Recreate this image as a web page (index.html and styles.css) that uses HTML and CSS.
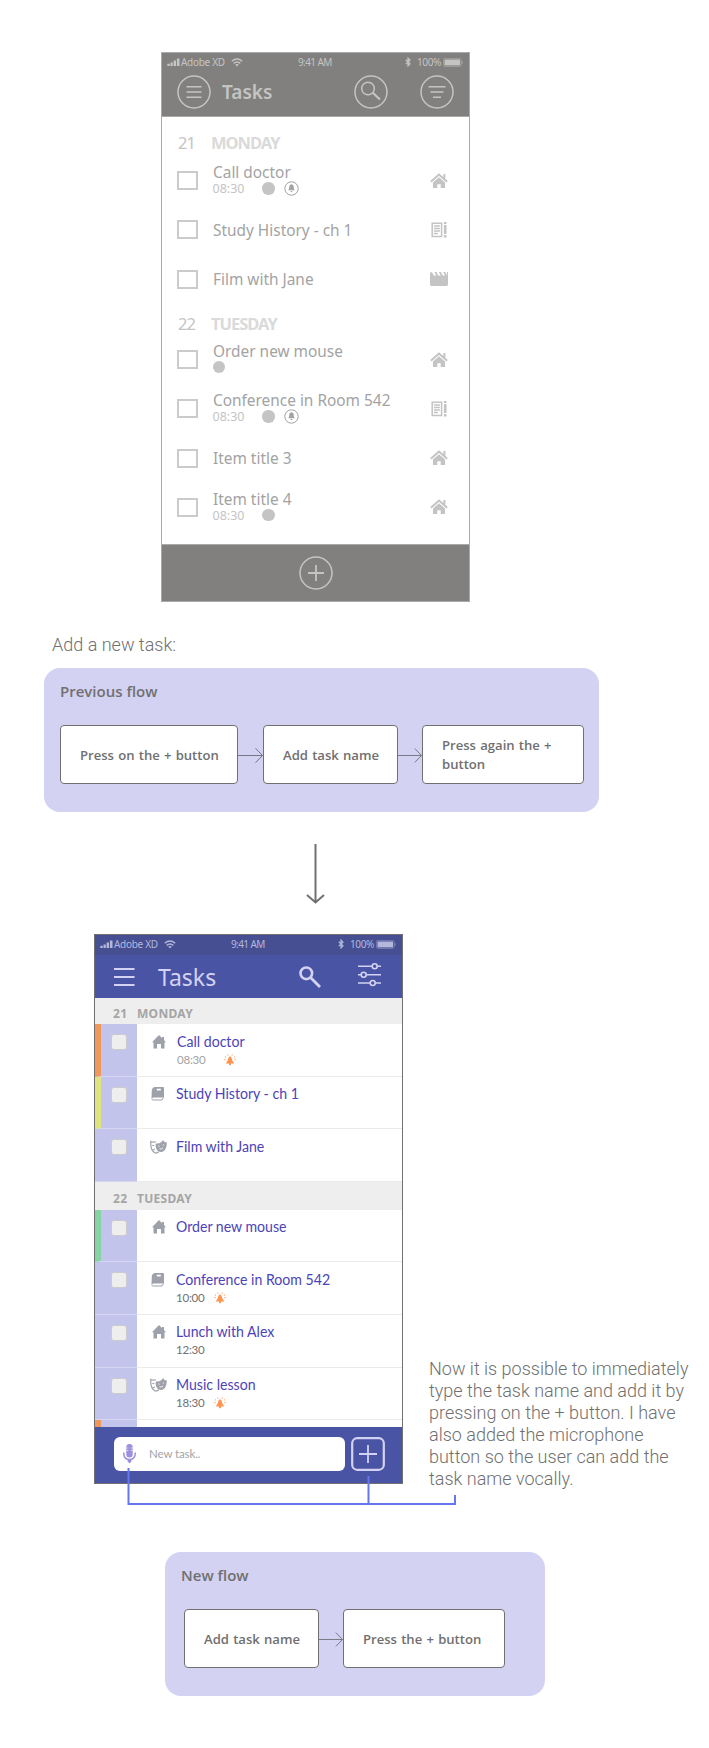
FILE: index.html
```html
<!DOCTYPE html>
<html lang="en">
<head>
<meta charset="utf-8">
<title>Tasks redesign</title>
<link rel="stylesheet" href="styles.css">
</head>
<body>
<svg class="defs" width="0" height="0">
  <symbol id="roof-house" viewBox="0 0 17 15"><path d="M.8 8.2 8.5 1.4l7.7 6.8M13.6 5.5V1" fill="none" stroke="currentColor" stroke-width="1.9"/><path d="M2.8 8.8 8.5 4l5.7 4.8v5.4h-4.1v-3.7H6.900v3.700H2.800z" fill="currentColor"/></symbol>
  <symbol id="notes" viewBox="0 0 17 16"><path d="M1.700 1.200h9.400v13.400H1.700z" fill="none" stroke="currentColor" stroke-width="1.500"/><path d="M3.400 4h6M3.400 6.500h6M3.400 9h6M3.400 11.500h4" stroke="currentColor" stroke-width="1.400"/><path d="M14.700 0v2M14.700 3v9M14.700 13v2.400" stroke="currentColor" stroke-width="2.600"/></symbol>
  <symbol id="clapper" viewBox="0 0 19 16"><path d="M0 2.500Q0 .6 2 .6l2 3.600h2.600L4.600.6h2.200l2 3.600h2.500L9.300.6h2.200l2 3.600h2.300L13.900.6H16l2 3.400V.6h1V13.500q0 2-2 2H2q-2 0-2-2z" fill="currentColor"/></symbol>
  <symbol id="bell-ring" viewBox="0 0 15 15"><circle cx="7.500" cy="7.500" r="6.700" fill="none" stroke="currentColor"/><path d="M7.500 3.200c2 .3 2.300 1.800 2.300 3.300 0 1.300.5 2 1 2.800H4.200c.5-.8 1-1.500 1-2.800 0-1.500.3-3 2.300-3.300zM6.500 10h2q-.2 1.300-1 1.300t-1-1.300z" fill="currentColor"/></symbol>
  <symbol id="house" viewBox="0 0 14 14"><path d="M7 0 10 2.900V2h2v2.900L14 7.300h-1.500v6.200H9V9H5v4.500H1.500V7.300H0z" fill="currentColor"/></symbol>
  <symbol id="book" viewBox="0 0 14 14"><path d="M3.500 0H12q1 0 1 1v9.500H3q-1.700 0-2.500 1L.8 3Q1.300.5 3.500 0z" fill="currentColor"/><path d="M5.800 2.600h4" stroke="#fff" stroke-width="1.700"/><path d="M12.500 10.500 11 13H2.300Q.8 13 .9 11.500" fill="none" stroke="currentColor"/></symbol>
  <symbol id="masks" viewBox="0 0 17 14"><path d="M6 1.700Q3.200 2.600.8 1.500c-.3 4 .8 9.500 4.300 11.500 1.400.2 2.800-.4 3.700-1.200" fill="none" stroke="currentColor" stroke-width="1.200"/><path d="M2.300 5.500h2M3 10.300q.7-1.300 2-1.300" stroke="currentColor" stroke-width="1.200" fill="none"/><path d="M5.800 3.500q3 .5 5.700-1.500L13.200 0l1 1.700q1 .8 2.600.6c0 4-1 9-5.300 9.700C7.500 12.600 5 8 5.800 3.500z" fill="currentColor"/><path d="M8.200 6.200q.7-.7 1.300 0M12.800 5.200q.7-.7 1.300 0M9.500 8.800q2 .9 3.700-1" fill="none" stroke="#fff" stroke-width=".9"/></symbol>
  <symbol id="alarm" viewBox="0 0 12 12"><path d="M6 2.300 7.300 3.200 8.300 6.200 10.200 9.400H1.800L3.700 6.200 4.700 3.200zM5 9.400h2v1.300l-1 .9-1-.9z" fill="currentColor"/><path d="M4 1.600 3.600.5M8 1.600 8.400.5M2 3.400 1 2.500M10 3.400l1-.9M1.500 5.600H.3M10.500 5.600h1.200" stroke="currentColor" stroke-width="1"/></symbol>
  <symbol id="bars" viewBox="0 0 14 14"><path d="M.3 11V8.700h2.400V11zM3.500 11V7.500h2.300V11zM6.600 11V5.500h2.400V11zM9.900 11V3.500h2.600V11z" fill="currentColor"/></symbol>
  <symbol id="wifi" viewBox="0 0 12 9"><path d="M.8 3.200q5.200-4.400 10.400 0M2.700 5.300q3.300-2.700 6.600 0" fill="none" stroke="currentColor" stroke-width="1.500"/><path d="m6 8.600-1.800-2Q6 5.400 7.800 6.600z" fill="currentColor"/></symbol>
  <symbol id="bluetooth" viewBox="0 0 6 10"><path d="m.7 2.800 4.300 4L3 9V1l2 2.100-4.300 4" fill="none" stroke="currentColor" stroke-width="1.200"/></symbol>
  <symbol id="battery" viewBox="0 0 20 9"><rect x=".4" y=".4" width="17.700" height="8" rx="1.500" fill="none" stroke="currentColor" stroke-width=".7" opacity=".6"/><path d="M1.500 1.500H17v5.900H1.500z" fill="currentColor"/><path d="M19 3v3" stroke="currentColor" opacity=".5"/></symbol>
  <symbol id="arrow" viewBox="0 0 25 16"><path d="M0 8.500h24.500M17.500 1.300 24.500 8.500l-7 7.200" fill="none" stroke="#77757f"/></symbol>
</svg>

<main class="board">
  <section class="phone old">
    <header class="old-header">
      <div class="status">
        <svg class="signal"><use href="#bars"/></svg><span class="carrier">Adobe XD</span><svg class="wifi"><use href="#wifi"/></svg>
        <span class="clock">9:41 AM</span>
        <svg class="bt"><use href="#bluetooth"/></svg><span class="percent">100%</span><svg class="battery"><use href="#battery"/></svg>
      </div>
      <div class="old-bar">
        <svg class="round" viewBox="0 0 34 34"><circle cx="17" cy="17" r="16"/><path d="M9.500 11.700h15M9.500 17h15M9.500 22.300h15"/></svg>
        <h1 class="old-title">Tasks</h1>
        <svg class="round search" viewBox="0 0 34 34"><circle cx="17" cy="17" r="16"/><circle cx="14" cy="13.500" r="6.300"/><path d="m18.500 17.500 7.500 7" stroke-width="2.200"/></svg>
        <svg class="round" viewBox="0 0 34 34"><circle cx="17" cy="17" r="16"/><path d="M8.500 11.700h17M10.500 17h13M13 22.300h8"/></svg>
      </div>
    </header>
    <div class="old-list">
      <h2 class="old-day"><span>21</span><b>MONDAY</b></h2>
      <div class="old-row"><i class="box"></i><div class="old-text double"><p>Call doctor</p><div class="meta"><small>08:30</small><i class="dot"></i><svg class="bell"><use href="#bell-ring"/></svg></div></div><svg class="kind"><use href="#roof-house"/></svg></div>
      <div class="old-row"><i class="box"></i><div class="old-text"><p>Study History - ch 1</p></div><svg class="kind"><use href="#notes"/></svg></div>
      <div class="old-row"><i class="box"></i><div class="old-text"><p>Film with Jane</p></div><svg class="kind"><use href="#clapper"/></svg></div>
      <h2 class="old-day second"><span>22</span><b>TUESDAY</b></h2>
      <div class="old-row"><i class="box"></i><div class="old-text double"><p>Order new mouse</p><div class="meta"><i class="dot"></i></div></div><svg class="kind"><use href="#roof-house"/></svg></div>
      <div class="old-row"><i class="box"></i><div class="old-text double"><p>Conference in Room 542</p><div class="meta"><small>08:30</small><i class="dot"></i><svg class="bell"><use href="#bell-ring"/></svg></div></div><svg class="kind"><use href="#notes"/></svg></div>
      <div class="old-row"><i class="box"></i><div class="old-text"><p>Item title 3</p></div><svg class="kind"><use href="#roof-house"/></svg></div>
      <div class="old-row"><i class="box"></i><div class="old-text double"><p>Item title 4</p><div class="meta"><small>08:30</small><i class="dot"></i></div></div><svg class="kind"><use href="#roof-house"/></svg></div>
    </div>
    <footer class="old-footer"><svg class="round" viewBox="0 0 34 34"><circle cx="17" cy="17" r="16"/><path d="M9 17h16M17 9v16" stroke-width="1.800"/></svg></footer>
  </section>

  <p class="caption">Add a new task:</p>

  <section class="flow previous">
    <h2>Previous flow</h2>
    <div class="steps">
      <div class="step long">Press on the + button</div><svg class="arrow"><use href="#arrow"/></svg>
      <div class="step short">Add task name</div><svg class="arrow tight"><use href="#arrow"/></svg>
      <div class="step medium">Press again the + button</div>
    </div>
  </section>

  <svg class="down" viewBox="0 0 20 62"><path d="M10.500 0v58M2 51 10.500 58.500 19 51" fill="none" stroke="#707070" stroke-width="2"/></svg>

  <div class="redesign">
    <section class="phone new">
      <div class="status">
        <svg class="signal"><use href="#bars"/></svg><span class="carrier">Adobe XD</span><svg class="wifi"><use href="#wifi"/></svg>
        <span class="clock">9:41 AM</span>
        <svg class="bt"><use href="#bluetooth"/></svg><span class="percent">100%</span><svg class="battery"><use href="#battery"/></svg>
      </div>
      <header class="new-bar">
        <svg class="menu" viewBox="0 0 21 20"><path d="M0 2h20.500M0 10h20.500M0 18h20.500"/></svg>
        <h1 class="new-title">Tasks</h1>
        <svg class="find" viewBox="0 0 22 22"><circle cx="7.300" cy="7.300" r="5.800"/><path d="m11.500 11.500 9.500 9.500" stroke-width="2.800"/></svg>
        <svg class="sliders" viewBox="0 0 23 24"><path d="M0 3.300h14M19.500 3.300H23M0 11.700h3M8.500 11.700H23M0 20h12M17.500 20H23"/><circle cx="16.700" cy="3.300" r="2.500"/><circle cx="5.700" cy="11.700" r="2.500"/><circle cx="14.700" cy="20" r="2.500"/></svg>
      </header>
      <h2 class="new-day"><span>21</span>MONDAY</h2>
      <div class="new-row orange"><div class="side"><i class="check"></i></div><svg class="type"><use href="#house"/></svg><div class="new-text far"><p>Call doctor</p><div class="when pale">08:30<svg class="alarm wide"><use href="#alarm"/></svg></div></div></div>
      <div class="new-row yellow"><div class="side"><i class="check"></i></div><svg class="type book"><use href="#book"/></svg><div class="new-text near"><p>Study History - ch 1</p></div></div>
      <div class="new-row"><div class="side"><i class="check"></i></div><svg class="type masks"><use href="#masks"/></svg><div class="new-text"><p>Film with Jane</p></div></div>
      <h2 class="new-day tall"><span>22</span>TUESDAY</h2>
      <div class="new-row green"><div class="side"><i class="check"></i></div><svg class="type"><use href="#house"/></svg><div class="new-text"><p>Order new mouse</p></div></div>
      <div class="new-row"><div class="side"><i class="check"></i></div><svg class="type book"><use href="#book"/></svg><div class="new-text"><p>Conference in Room 542</p><div class="when">10:00<svg class="alarm"><use href="#alarm"/></svg></div></div></div>
      <div class="new-row"><div class="side"><i class="check"></i></div><svg class="type"><use href="#house"/></svg><div class="new-text"><p>Lunch with Alex</p><div class="when">12:30</div></div></div>
      <div class="new-row"><div class="side"><i class="check"></i></div><svg class="type masks"><use href="#masks"/></svg><div class="new-text"><p>Music lesson</p><div class="when">18:30<svg class="alarm"><use href="#alarm"/></svg></div></div></div>
      <div class="new-row orange peek"><div class="side"></div></div>
      <footer class="new-footer">
        <div class="field"><svg class="mic" viewBox="0 0 13 20"><rect x="3.300" y="0" width="6.400" height="13.500" rx="3.200" fill="#9c8fdc"/><path d="M.8 8.500v1.800q.6 5 5.700 5.200 5.100-.2 5.700-5.200V8.500" fill="none" stroke="#9c8fdc" stroke-width="1.500"/><path d="M4.700 15.500h3.600v2L6.500 19.500l-1.800-2z" fill="#9c8fdc"/><path d="M3.300 4h2M7.700 4h2M3.300 6.500h2M7.700 6.500h2" stroke="#fff" stroke-width=".6"/></svg><span>New task..</span></div>
        <svg class="add" viewBox="0 0 34 34"><rect x="1.200" y="1.200" width="31.600" height="31.600" rx="5"/><path d="M8 17h18M17 8v18" stroke-width="1.800"/></svg>
      </footer>
    </section>
    <p class="note">Now it is possible to immediately type the task name and add it by pressing on the + button. I have also added the microphone button so the user can add the task name vocally.</p>
    <svg class="connector" viewBox="0 0 330 38"><path d="M1.500 0v36H328v-9M241.500 8v28" fill="none" stroke="#6675f0" stroke-width="2"/></svg>
  </div>

  <section class="flow next">
    <h2>New flow</h2>
    <div class="steps">
      <div class="step short">Add task name</div><svg class="arrow tight"><use href="#arrow"/></svg>
      <div class="step medium">Press the + button</div>
    </div>
  </section>
</main>
</body>
</html>
```

FILE: styles.css
```css
* { box-sizing: border-box; }
body { margin: 0; background: #fff; font-family: "Noto Sans", sans-serif; }
h1, h2, p { margin: 0; font-weight: 400; }
svg { display: block; flex: none; }
i { flex: none; }
.defs { position: absolute; }
.board { width: 709px; height: 1748px; display: flex; flex-direction: column; padding-top: 52px; overflow: hidden; }

.phone { width: 309px; height: 550px; display: flex; flex-direction: column; flex: none; overflow: hidden; }
.status { display: flex; align-items: center; height: 20px; padding: 0 0 2px 5px; font: 10px/18px "Noto Sans", sans-serif; color: #c4c4c4; white-space: nowrap; }
.signal { width: 14px; height: 14px; }
.carrier { width: 46px; letter-spacing: -0.3px; }
.wifi { width: 12px; height: 9px; margin-left: 4px; }
.clock { width: 36px; margin-left: 55px; letter-spacing: -0.6px; }
.bt { width: 6px; height: 10px; margin-left: 71px; }
.percent { width: 26px; margin-left: 6px; letter-spacing: -0.4px; }
.battery { width: 20px; height: 9px; }

.old { margin-left: 161px; border: 1px solid #aaa; }
.old-header { height: 64px; background: #81807e; flex: none; border-bottom: 1px solid #aaa; }
.old-bar { display: flex; align-items: center; height: 40px; margin-top: -1px; padding-left: 15px; }
.round { width: 34px; height: 34px; fill: none; stroke: #c4c4c4; stroke-width: 1.500; }
.old-title { width: 132px; margin-left: 11px; font-size: 19px; font-weight: 600; line-height: 26px; color: #c4c4c4; }
.round.search { margin-right: 32px; }
.old-list { flex: 1; padding-top: 8px; }
.old-day { display: flex; align-items: center; height: 31px; padding: 4px 0 0 16px; font-size: 16.500px; line-height: 22px; color: #c4c4c4; }
.old-day span { width: 33px; letter-spacing: -1px; }
.old-day b { color: #dadada; font-weight: 700; letter-spacing: -1px; }
.old-day.second { height: 31px; padding-top: 9px; }
.old-row { display: flex; align-items: center; height: 49.300px; padding: 0 21px 0 15px; }
.box { width: 21px; height: 19px; border: 2px solid #cbcbcb; }
.old-text { flex: 1; padding: 0 0 1px 14.500px; color: #a3a3a3; }
.old-text.double { padding-bottom: 4.800px; }
.old-text p { font-size: 16.700px; line-height: 19px; white-space: nowrap; transform: scaleX(0.923); transform-origin: left; }
.meta { display: flex; align-items: center; height: 13px; margin-top: 1px; }
.meta small { width: 49.500px; font-size: 12.500px; line-height: 13px; color: #c4c4c4; }
.dot { width: 12.500px; height: 12.500px; border-radius: 50%; background: #c4c4c4; }
.bell { width: 15px; height: 15px; margin-left: 9.500px; }
.kind { width: 18px; height: 16px; color: #c4c4c4; }
.old-footer { height: 57px; background: #81807e; border-top: 1px solid #aaa; display: flex; align-items: center; justify-content: center; flex: none; }

.caption { margin: 31px 0 0 52px; font: 300 18px/24px Roboto, sans-serif; color: #707070; height: 35px; }

.flow { height: 144px; flex: none; border-radius: 16px; background: #d4d2f2; color: #707070; }
.flow h2 { font: 600 15px/24px "Open Sans", sans-serif; }
.previous { width: 555px; margin-left: 44px; padding: 11px 15px 0 16px; }
.steps { display: flex; align-items: center; margin-top: 22px; }
.step { height: 59px; display: flex; align-items: center; padding: 1px 19px 0; border: 1px solid #707070; border-radius: 4px; background: #fff; font: 600 13.100px/19px "Open Sans", sans-serif; word-spacing: 0.8px; flex: none; }
.long { width: 178px; white-space: nowrap; }
.short { width: 135px; white-space: nowrap; }
.medium { width: 162px; }
.arrow { width: 25px; height: 16px; }
.arrow.tight { width: 24px; }
.down { width: 20px; height: 62px; margin: 32px 0 28px 305px; }

.redesign { display: flex; position: relative; height: 618px; padding-left: 94px; flex: none; }
.new { border: 1px solid #707070; background: #fff; }
.new .status { height: 20px; flex: none; background: #454f92; color: #b4b7dc; }
.new-bar { display: flex; align-items: center; height: 43px; flex: none; background: #4954a5; padding-left: 19px; fill: none; stroke: #d4d2f2; stroke-width: 2; }
.menu { width: 21px; height: 20px; }
.new-title { width: 141px; margin-left: 23px; font-size: 23px; line-height: 30px; color: #d4d2f2; }
.find { width: 22px; height: 22px; stroke-width: 2.600; }
.sliders { width: 23px; height: 24px; margin: -4px 0 0 37px; stroke-width: 1.600; }
.new-day { display: flex; align-items: center; flex: none; height: 26px; padding: 4px 0 0 18px; background: #eee; font-size: 12px; font-weight: 700; letter-spacing: 0.3px; color: #a5a5a5; }
.new-day span { width: 24px; }
.tall { height: 28px; padding-top: 5px; }
.new-row { display: flex; flex: none; height: 52.600px; border-bottom: 1px solid #ebebeb; }
.side { width: 42px; margin-bottom: -1px; padding: 10px 0 0 16px; background: #c2c4ec; border-bottom: 1px solid #d5d6ef; }
.orange .side, .yellow .side, .green .side { border-left: 6px solid #f0975c; padding-left: 10px; }
.yellow .side { border-left-color: #dfe380; }
.green .side { border-left-color: #86d4a4; }
.check { display: block; width: 16px; height: 16px; border: 1px solid #ccc; border-radius: 3px; background: #eee; }
.type { width: 14px; height: 14px; margin: 10.500px 0 0 14.500px; color: #9fa1aa; }
.type.book { margin-left: 14px; margin-right: 0.500px; }
.type.masks { width: 17px; margin-left: 13px; margin-right: -1.500px; }
.new-text { padding: 7.500px 0 0 10.500px; font-family: Lato, sans-serif; color: #4c43b8; }
.new-text.far { padding-left: 11.500px; }
.new-text.near { padding-left: 10px; }
.new-text p { font-size: 14.900px; line-height: 19px; white-space: nowrap; transform: scaleX(0.948); transform-origin: left; }
.when { display: flex; align-items: center; height: 18px; font-size: 11.500px; line-height: 18px; color: #707070; letter-spacing: -0.200px; }
.when.pale { color: #a3a3a3; letter-spacing: -0.200px; }
.alarm { width: 12px; height: 12px; margin-left: 9px; color: #ff9350; }
.alarm.wide { margin-left: 18px; }
.peek { height: 8px; border: 0; }
.new-footer { height: 57px; margin-top: -1px; flex: none; display: flex; align-items: center; padding: 0 0 3px 19px; background: #4954a5; position: relative; }
.field { width: 231px; height: 34px; display: flex; align-items: center; padding-left: 9px; border-radius: 6px; background: #fff; font: 11.500px/16px Lato, sans-serif; letter-spacing: -0.100px; color: #a3a3a3; }
.mic { width: 13px; height: 20px; margin: -1px 13px 0 0; }
.add { width: 34px; height: 34px; margin-left: 6px; fill: none; stroke: #d4d2f2; stroke-width: 2.200; }
.note { width: 270px; margin: 424px 0 0 26px; font: 300 18px/22px Roboto, sans-serif; color: #707070; }
.connector { position: absolute; left: 127px; top: 534px; width: 330px; height: 38px; }
.next { width: 380px; margin-left: 165px; padding: 11px 0 0 16px; }
.next .steps { padding-left: 3px; }
```
